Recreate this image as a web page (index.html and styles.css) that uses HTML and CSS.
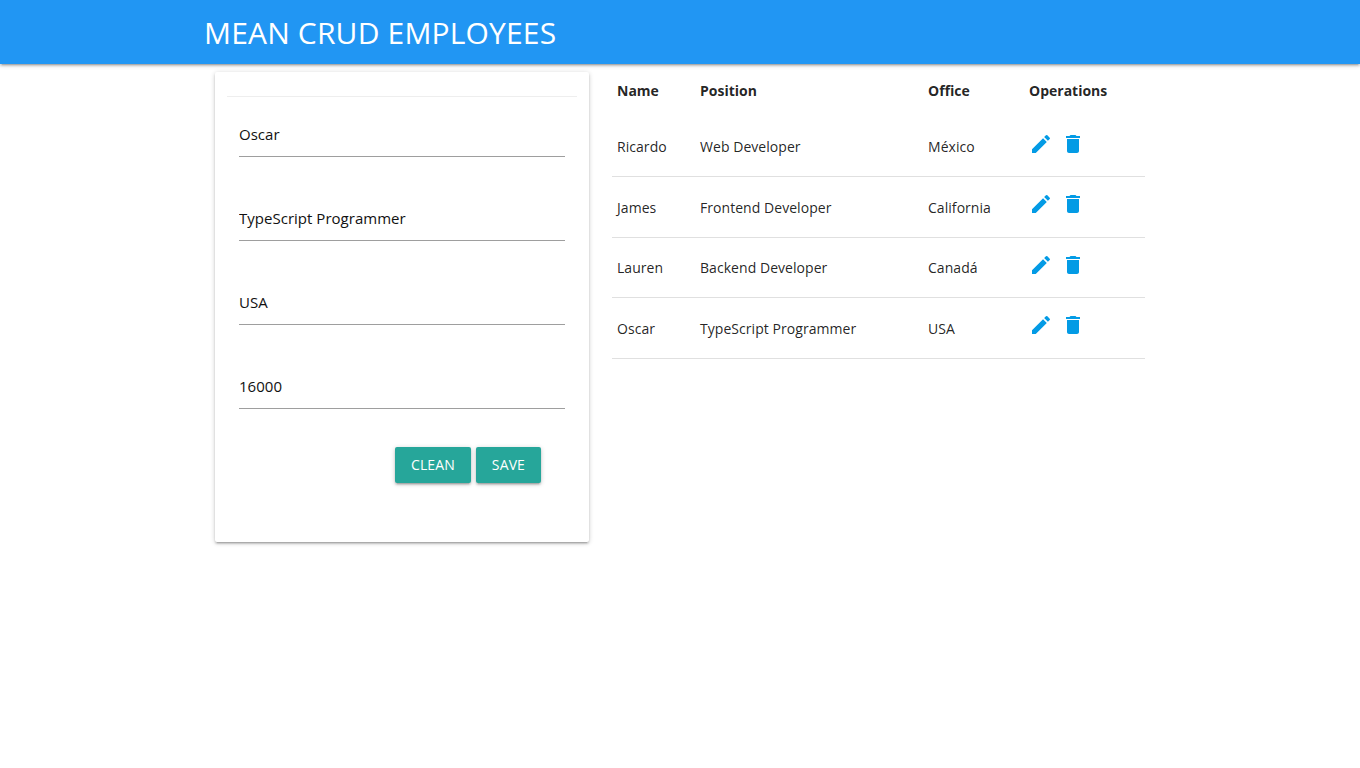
FILE: index.html
```html
<!DOCTYPE html>
<html lang="en">
<head>
  <meta charset="UTF-8" />
  <title>MEAN CRUD Employees</title>
  <link rel="stylesheet" href="styles.css">
</head>
<body>

<nav class="navbar">
  <div class="container">
    <span class="brand">MEAN CRUD EMPLOYEES</span>
  </div>
</nav>

<div class="container main">
  <!-- Form -->
  <div class="card">
    <hr class="divider" />
    <form class="form">
      <input class="field" type="text" value="Oscar" />
      <input class="field" type="text" value="TypeScript Programmer" />
      <input class="field" type="text" value="USA" />
      <input class="field" type="text" value="16000" />
      <div class="actions">
        <button class="btn" type="button">Clean</button>
        <button class="btn" type="button">Save</button>
      </div>
    </form>
  </div>

  <!-- Table -->
  <table class="employees">
    <colgroup>
      <col class="col-name" />
      <col class="col-position" />
      <col class="col-office" />
      <col class="col-ops" />
    </colgroup>
    <thead>
      <tr>
        <th>Name</th>
        <th>Position</th>
        <th>Office</th>
        <th>Operations</th>
      </tr>
    </thead>
    <tbody>
      <tr>
        <td>Ricardo</td>
        <td>Web Developer</td>
        <td>México</td>
        <td class="ops">
          <svg class="icon" viewBox="0 0 24 24"><path d="M3 17.25V21h3.75L17.81 9.94l-3.75-3.75L3 17.25zM20.71 7.04a1 1 0 0 0 0-1.41l-2.34-2.34a1 1 0 0 0-1.41 0l-1.83 1.83 3.75 3.75 1.83-1.83z"/></svg>
          <svg class="icon" viewBox="0 0 24 24"><path d="M6 19c0 1.1.9 2 2 2h8c1.1 0 2-.9 2-2V7H6v12zM19 4h-3.5l-1-1h-5l-1 1H5v2h14V4z"/></svg>
        </td>
      </tr>
      <tr>
        <td>James</td>
        <td>Frontend Developer</td>
        <td>California</td>
        <td class="ops">
          <svg class="icon" viewBox="0 0 24 24"><path d="M3 17.25V21h3.75L17.81 9.94l-3.75-3.75L3 17.25zM20.71 7.04a1 1 0 0 0 0-1.41l-2.34-2.34a1 1 0 0 0-1.41 0l-1.83 1.83 3.75 3.75 1.83-1.83z"/></svg>
          <svg class="icon" viewBox="0 0 24 24"><path d="M6 19c0 1.1.9 2 2 2h8c1.1 0 2-.9 2-2V7H6v12zM19 4h-3.5l-1-1h-5l-1 1H5v2h14V4z"/></svg>
        </td>
      </tr>
      <tr>
        <td>Lauren</td>
        <td>Backend Developer</td>
        <td>Canadá</td>
        <td class="ops">
          <svg class="icon" viewBox="0 0 24 24"><path d="M3 17.25V21h3.75L17.81 9.94l-3.75-3.75L3 17.25zM20.71 7.04a1 1 0 0 0 0-1.41l-2.34-2.34a1 1 0 0 0-1.41 0l-1.83 1.83 3.75 3.75 1.83-1.83z"/></svg>
          <svg class="icon" viewBox="0 0 24 24"><path d="M6 19c0 1.1.9 2 2 2h8c1.1 0 2-.9 2-2V7H6v12zM19 4h-3.5l-1-1h-5l-1 1H5v2h14V4z"/></svg>
        </td>
      </tr>
      <tr>
        <td>Oscar</td>
        <td>TypeScript Programmer</td>
        <td>USA</td>
        <td class="ops">
          <svg class="icon" viewBox="0 0 24 24"><path d="M3 17.25V21h3.75L17.81 9.94l-3.75-3.75L3 17.25zM20.71 7.04a1 1 0 0 0 0-1.41l-2.34-2.34a1 1 0 0 0-1.41 0l-1.83 1.83 3.75 3.75 1.83-1.83z"/></svg>
          <svg class="icon" viewBox="0 0 24 24"><path d="M6 19c0 1.1.9 2 2 2h8c1.1 0 2-.9 2-2V7H6v12zM19 4h-3.5l-1-1h-5l-1 1H5v2h14V4z"/></svg>
        </td>
      </tr>
    </tbody>
  </table>
</div>

</body>
</html>
```

FILE: styles.css
```css
* {
  box-sizing: border-box;
}

html, body {
  margin: 0;
  padding: 0;
  min-height: 100vh;
  font-family: 'Open Sans', sans-serif;
  color: rgba(0, 0, 0, 0.87);
}

.container {
  width: 952px;
  margin: 0 auto;
}

.navbar {
  height: 64px;
  background: #2196f3;
  color: #fff;
  box-shadow: 0 2px 2px 0 rgba(0,0,0,0.14), 0 3px 1px -2px rgba(0,0,0,0.12), 0 1px 5px 0 rgba(0,0,0,0.2);
}

.brand {
  display: block;
  font-size: 30px;
  line-height: 66px;
  letter-spacing: 0.17px;
}

.main {
  display: flex;
  align-items: flex-start;
  padding-left: 11px;
}

.card {
  width: 374px;
  height: 470px;
  margin-top: 8px;
  padding: 24px 12px 0;
  background: #fff;
  border-radius: 2px;
  box-shadow: 0 2px 2px 0 rgba(0,0,0,0.14), 0 3px 1px -2px rgba(0,0,0,0.12), 0 1px 5px 0 rgba(0,0,0,0.2);
}

.divider {
  height: 1px;
  margin: 0;
  border: none;
  background: #eee;
}

.form {
  display: flex;
  flex-direction: column;
  gap: 36px;
  padding: 12px 12px 0;
}

.field {
  width: 100%;
  height: 48px;
  padding: 2px 0 0;
  border: none;
  border-bottom: 1px solid #9e9e9e;
  outline: none;
  background: transparent;
  font-family: inherit;
  font-size: 15px;
  letter-spacing: 0.02px;
  color: #111;
}

.actions {
  display: flex;
  justify-content: flex-end;
  gap: 5px;
  margin-top: 2px;
  padding-right: 24px;
}

.btn {
  height: 36px;
  padding: 0 16px 2px;
  border: none;
  border-radius: 2px;
  background: #26a69a;
  color: #fff;
  font-family: inherit;
  font-size: 14px;
  letter-spacing: 0.12px;
  text-transform: uppercase;
  box-shadow: 0 2px 2px 0 rgba(0,0,0,0.14), 0 3px 1px -2px rgba(0,0,0,0.12), 0 1px 5px 0 rgba(0,0,0,0.2);
}

.employees {
  width: 533px;
  margin-left: 23px;
  border-collapse: collapse;
  table-layout: fixed;
  font-size: 14px;
}

.col-name { width: 83px; }
.col-position { width: 228px; }
.col-office { width: 101px; }
.col-ops { width: 121px; }

th {
  height: 52px;
  padding: 0 5px;
  text-align: left;
  font-weight: 700;
  white-space: nowrap;
}

td {
  height: 60.5px;
  padding: 1px 5px 0;
  letter-spacing: 0.05px;
  white-space: nowrap;
}

tbody tr {
  border-bottom: 1px solid rgba(0, 0, 0, 0.12);
}

.ops {
  padding-bottom: 6px;
  font-size: 0;
}

.icon {
  width: 24px;
  height: 24px;
  margin-right: 8px;
  fill: #039be5;
}
```
